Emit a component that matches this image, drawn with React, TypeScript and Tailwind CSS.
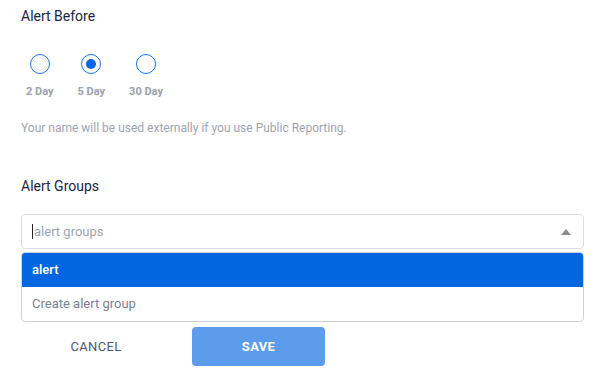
const options = [
  { label: '2 Day', checked: false },
  { label: '5 Day', checked: true },
  { label: '30 Day', checked: false },
];

const App = () => {
  return (
    <div className="w-[599px] h-[376px] bg-white overflow-hidden" style={{ fontFamily: 'Roboto, "Liberation Sans", sans-serif' }}>
      <div className="pl-[21px] pr-[15px]">
        {/* Alert before */}
        <h2 className="pt-[6px] text-[14px] leading-[20px] text-[#1c2540]">Alert Before</h2>
        <div className="flex gap-[24px] mt-[28px] ml-[5px]">
          {options.map(o => (
            <div key={o.label} className="flex flex-col items-center">
              <div className="w-[20px] h-[20px] rounded-full border-[1.5px] border-[#1a73e8] flex items-center justify-center">
                {o.checked && <div className="w-[10px] h-[10px] rounded-full bg-[#0a66e0]" />}
              </div>
              <span className="mt-[10px] text-[11px] leading-[16px] font-bold text-[#9aa1ad]">{o.label}</span>
            </div>
          ))}
        </div>
        <p className="mt-[20px] text-[12px] leading-[16px] text-[#9ea4b0]">Your name will be used externally if you use Public Reporting.</p>

        {/* Alert groups */}
        <h2 className="mt-[40px] text-[14px] leading-[20px] text-[#1c2540]">Alert Groups</h2>
        <div className="mt-[18px] h-[35px] border border-[#dcdde2] rounded-[4px] flex items-center pl-[10px] pr-[12px]">
          <span className="w-px h-[15px] bg-[#222] mr-px" />
          <span className="flex-1 text-[13px] text-[#9ea4b0]">alert groups</span>
          <svg width="10" height="6" viewBox="0 0 10 6"><path d="M0 6 L5 0 L10 6 Z" fill="#888c94" /></svg>
        </div>
        <div className="mt-[3px] border border-[#cfd1d6] rounded-[4px] overflow-hidden">
          <div className="h-[34px] bg-[#0166e0] flex items-center pl-[10px] text-[13px] font-medium text-white">alert</div>
          <div className="h-[34px] flex items-center pl-[10px] text-[13px] text-[#7a7f94]">Create alert group</div>
        </div>

        {/* Actions */}
        <div className="flex items-center mt-[5px]">
          <button className="w-[150px] h-[39px] text-[13px] text-[#4f5670] tracking-wide">CANCEL</button>
          <button className="ml-[21px] w-[133px] h-[39px] rounded-[4px] bg-[#5d9bec] text-white text-[13px] font-bold tracking-wide">SAVE</button>
        </div>
      </div>
    </div>
  );
};

export default App;
